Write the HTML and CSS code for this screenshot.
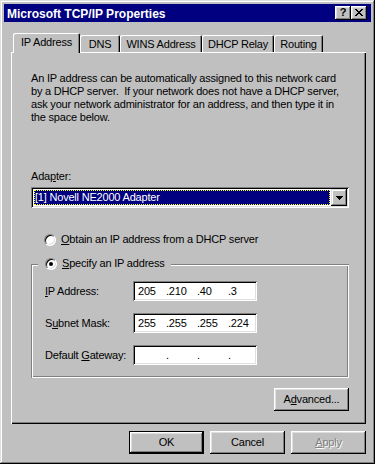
FILE: index.html
```html
<!DOCTYPE html>
<html lang="en">

<head>
  <meta charset="UTF-8">
  <link rel="stylesheet" href="styles.css">
</head>

<body>
  <div class="window">
    <div class="titlebar">
      <span class="title">Microsoft TCP/IP Properties</span>
      <span class="title-btn help">?</span>
      <span class="title-btn close">
        <svg width="8" height="7" viewBox="0 0 8 7"><path d="M0 0h2v1H0zM6 0h2v1H6zM1 1h2v1H1zM5 1h2v1H5zM2 2h4v1H2zM3 3h2v1H3zM2 4h4v1H2zM1 5h2v1H1zM5 5h2v1H5zM0 6h2v1H0zM6 6h2v1H6z" fill="#000"/></svg>
      </span>
    </div>

    <div class="dialog">
      <div class="tabs">
        <span class="tab active tab-ip">IP Address</span>
        <span class="tab tab-dns">DNS</span>
        <span class="tab tab-wins">WINS Address</span>
        <span class="tab tab-dhcp">DHCP Relay</span>
        <span class="tab tab-routing">Routing</span>
      </div>

      <div class="panel">
        <p class="intro">An IP address can be automatically assigned to this network card<br>by a DHCP server.&nbsp; If your network does not have a DHCP server,<br>ask your network administrator for an address, and then type it in<br>the space below.</p>

        <span class="adapter-label">Ada<u>p</u>ter:</span>
        <div class="combo">
          <span class="combo-value">[1] Novell NE2000 Adapter</span>
          <span class="combo-btn">
            <svg width="7" height="4" viewBox="0 0 7 4"><path d="M0 0h7v1H0zM1 1h5v1H1zM2 2h3v1H2zM3 3h1v1H3z" fill="#000"/></svg>
          </span>
        </div>

        <div class="option obtain">
          <span class="radio"></span>
          <span><u>O</u>btain an IP address from a DHCP server</span>
        </div>

        <div class="group">
          <div class="option legend">
            <span class="radio on"></span>
            <span><u>S</u>pecify an IP address</span>
          </div>
          <div class="ip-row">
            <span><u>I</u>P Address:</span>
            <div class="ip"><span>205</span><span>.210</span><span>.40</span><span>.3</span></div>
          </div>
          <div class="ip-row">
            <span>S<u>u</u>bnet Mask:</span>
            <div class="ip"><span>255</span><span>.255</span><span>.255</span><span>.224</span></div>
          </div>
          <div class="ip-row">
            <span>Default <u>G</u>ateway:</span>
            <div class="ip"><span></span><span>.</span><span>.</span><span>.</span></div>
          </div>
        </div>

        <button class="btn advanced">A<u>d</u>vanced...</button>
      </div>

      <div class="actions">
        <button class="btn default">OK</button>
        <button class="btn">Cancel</button>
        <button class="btn disabled"><u>A</u>pply</button>
      </div>
    </div>
  </div>
</body>

</html>
```

FILE: styles.css
```css
*,
*::before,
*::after {
  box-sizing: border-box;
}

:root {
  --face: #c0c0c0;
  --shadow: #808080;
  --light: #dfdfdf;
  --title-bg: #000080;
}

body {
  margin: 0;
  background: #fff;
  font-family: "Liberation Sans", Arial, sans-serif;
  font-size: 11px;
  line-height: 13px;
  letter-spacing: -0.2px;
  color: #000;
}

u {
  text-decoration-thickness: 1px;
  text-underline-offset: 1px;
}

.window {
  width: 375px;
  height: 464px;
  padding: 4px;
  background: var(--face);
  display: flex;
  flex-direction: column;
  box-shadow: inset -1px -1px #000, inset 1px 1px var(--light),
    inset -2px -2px var(--shadow), inset 2px 2px #fff;
}

/* title bar */

.titlebar {
  height: 18px;
  padding: 0 4px 0 3px;
  background: var(--title-bg);
  color: #fff;
  display: flex;
  align-items: center;
}

.title {
  flex: 1;
  padding-top: 2px;
  font-size: 12px;
  line-height: 14px;
  font-weight: bold;
  letter-spacing: 0;
}

.title-btn {
  width: 16px;
  height: 14px;
  background: var(--face);
  color: #000;
  display: flex;
  align-items: center;
  justify-content: center;
  box-shadow: inset -1px -1px #000, inset 1px 1px #fff,
    inset -2px -2px var(--shadow), inset 2px 2px var(--light);
}

.help {
  font-weight: bold;
  font-size: 11px;
  letter-spacing: 0;
  padding-bottom: 1px;
}

.close {
  margin-left: 0;
  padding-bottom: 1px;
}

/* dialog body */

.dialog {
  flex: 1;
  padding: 11px 5px 0 7px;
  display: flex;
  flex-direction: column;
}

.tabs {
  height: 19px;
  padding-left: 2px;
  display: flex;
  align-items: flex-end;
}

.tab {
  height: 17px;
  padding-top: 3px;
  text-align: center;
  white-space: nowrap;
  border-top-left-radius: 2px;
  border-top-right-radius: 2px;
  box-shadow: inset 1px 1px #fff, inset -1px 0 #000, inset -2px 0 var(--shadow);
}

.tab.active {
  height: 20px;
  margin-bottom: -1px;
  position: relative;
  z-index: 1;
  background: var(--face);
}

.tab-ip { width: 67px; }
.tab-dns { width: 40px; }
.tab-wins { width: 82px; }
.tab-dhcp { width: 72px; }
.tab-routing { width: 49px; }

.panel {
  height: 372px;
  padding: 20px 17px 0 20px;
  display: flex;
  flex-direction: column;
  box-shadow: inset 1px 1px #fff, inset -1px -1px #000, inset -2px -2px var(--shadow);
}

.intro {
  margin: 0;
  white-space: nowrap;
}

.adapter-label {
  margin-top: 46px;
}

/* combo box */

.combo {
  height: 21px;
  margin-top: 4px;
  padding: 2px;
  background: #fff;
  display: flex;
  box-shadow: inset 1px 1px var(--shadow), inset -1px -1px #fff,
    inset 2px 2px #000, inset -2px -2px var(--light);
}

.combo-value {
  flex: 1;
  margin: 1px;
  background: var(--title-bg);
  color: #fff;
  border: 1px dotted #ffff00;
  white-space: nowrap;
}

.combo-btn {
  width: 16px;
  height: 17px;
  background: var(--face);
  display: flex;
  align-items: center;
  justify-content: center;
  box-shadow: inset -1px -1px #000, inset 1px 1px var(--light),
    inset -2px -2px var(--shadow), inset 2px 2px #fff;
}

/* radios */

.option {
  display: flex;
  align-items: center;
  gap: 5px;
  white-space: nowrap;
}

.obtain {
  margin: 25px 0 0 13px;
}

.radio {
  width: 12px;
  height: 12px;
  border-radius: 50%;
  background: #fff;
  border: 1px solid;
  border-color: var(--shadow) #fff #fff var(--shadow);
  box-shadow: inset 1px 1px #000, inset -1px -1px var(--light);
  display: flex;
  align-items: center;
  justify-content: center;
}

.radio.on::after {
  content: "";
  width: 4px;
  height: 4px;
  border-radius: 50%;
  background: #000;
}

/* group box */

.group {
  margin-top: 18px;
  padding: 0 0 13px 14px;
  display: flex;
  flex-direction: column;
  gap: 12px;
  box-shadow: inset 1px 1px var(--shadow), inset -1px -1px #fff,
    inset 2px 2px #fff, inset -2px -2px var(--shadow);
}

.legend {
  align-self: flex-start;
  margin: -7px 0 -1px -7px;
  padding: 0 6px 0 7px;
  background: var(--face);
}

.ip-row {
  height: 20px;
  display: grid;
  grid-template-columns: 88px 124px;
  align-items: center;
  white-space: nowrap;
}

.ip {
  height: 20px;
  padding-left: 5px;
  background: #fff;
  display: grid;
  grid-template-columns: 28px 31px 31px 31px;
  align-items: center;
  box-shadow: inset 1px 1px var(--shadow), inset -1px -1px #fff,
    inset 2px 2px #000, inset -2px -2px var(--light);
}

/* buttons */

.btn {
  width: 75px;
  height: 23px;
  padding: 0;
  border: 0;
  font: inherit;
  letter-spacing: inherit;
  color: #000;
  background: var(--face);
  box-shadow: inset -1px -1px #000, inset 1px 1px #fff,
    inset -2px -2px var(--shadow), inset 2px 2px var(--light);
}

.btn.default {
  border: 1px solid #000;
}

.btn.disabled {
  color: var(--shadow);
  text-shadow: 1px 1px #fff;
}

.advanced {
  align-self: flex-end;
  margin-top: 10px;
}

.actions {
  margin-top: 7px;
  display: flex;
  justify-content: flex-end;
  gap: 6px;
}
```
